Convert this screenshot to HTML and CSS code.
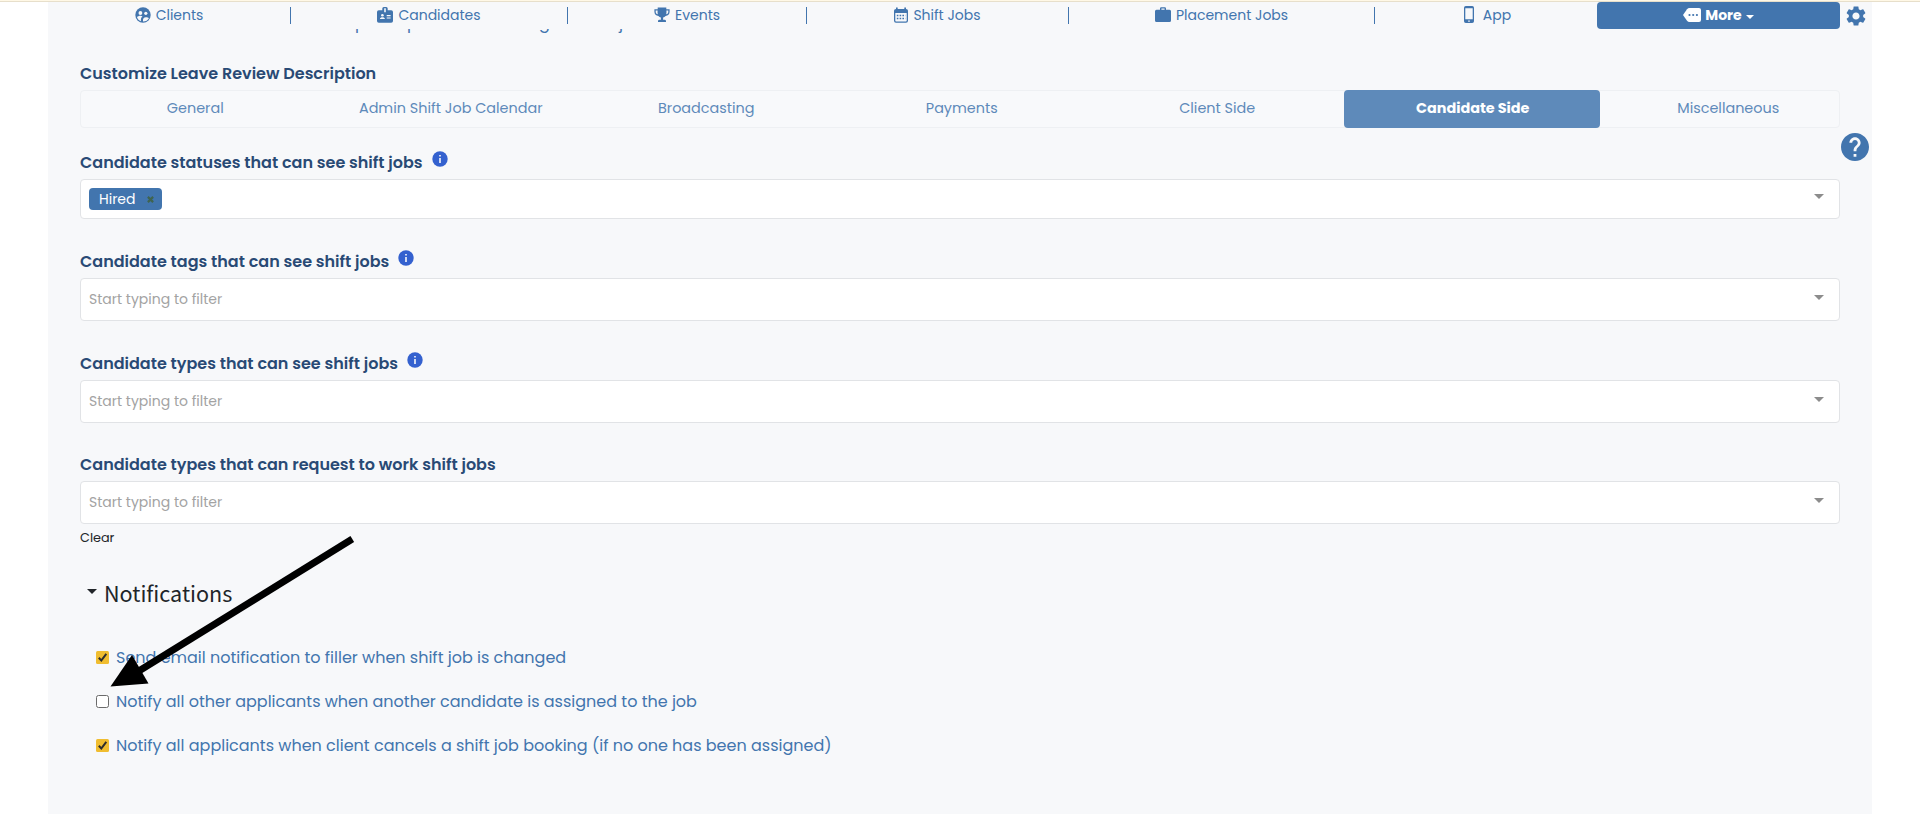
FILE: index.html
```html
<!DOCTYPE html>
<html lang="en">
<head>
<meta charset="utf-8">
<title>Settings</title>
<link rel="stylesheet" href="styles.css">
</head>
<body>
<div class="strip"></div>
<main class="panel">
  <nav class="nav">
    <a class="nav-item"><svg class="ico" viewBox="0 0 16 16"><circle cx="8" cy="8" r="7.7" fill="#4275ae"/><g fill="#f7f8fa"><circle cx="5.4" cy="6" r="1.9"/><circle cx="10.8" cy="6.3" r="1.6"/><path d="M2 10.3c.8-1.300 4-2 5.500-.9-1.500.9-1.800 2.600-1.500 4.800C4 13.500 2.600 12.200 2 10.300zM8 14.500c-.3-3 .8-4.300 2.900-4.300 1.400 0 2.400.4 3 1-1 2-3.100 3.300-5.900 3.300z"/></g></svg><span>Clients</span></a>
    <a class="nav-item"><svg class="ico" viewBox="0 0 16 16"><path fill="#4275ae" d="M1.800 3.200H5.300V1.500Q5.300 0 6.800 0h2.400q1.500 0 1.500 1.500v1.700h3.500Q16 3.200 16 5v9q0 1.700-1.800 1.700H1.800Q0 15.700 0 14V5q0-1.800 1.800-1.800z"/><g fill="#f7f8fa"><path d="M7.200 1.300h1.600v4H7.200zM9.700 8h3.900v1.200H9.700zM9.700 10.400h3.900v1.200H9.700zM2.900 12c0-2.300 5-2.300 5 0z"/><circle cx="5.400" cy="8.300" r="1.300"/></g></svg><span>Candidates</span></a>
    <a class="nav-item"><svg class="ico" viewBox="0 0 16 16"><path fill="#4275ae" fill-rule="evenodd" d="M3.700.6h8.600v1.600h3.300v2.500c0 2.400-1.700 3.900-4 4.200-.7.9-1.500 1.400-2.500 1.700v2.200h1.500q1.400 0 1.400 1.400v.8H4v-.8q0-1.400 1.400-1.400h1.500v-2.200c-1-.3-1.800-.8-2.500-1.700-2.300-.3-4-1.800-4-4.200V2.200h3.300zM1.700 3.600v1.100c0 1.300.8 2.200 2.100 2.600-.3-1.200-.3-2.300-.2-3.700zM14.300 3.600h-1.900c.1 1.400.1 2.500-.2 3.700 1.300-.4 2.100-1.300 2.100-2.600z"/></svg><span>Events</span></a>
    <a class="nav-item"><svg class="ico ico-shift" viewBox="0 0 14 16"><path fill="#4275ae" fill-rule="evenodd" d="M2 .4h1.700v1.500h6.600V.4H12v1.500q2 .1 2 1.900v9.900q0 2-2 2H2q-2 0-2-2V3.800Q0 2 2 1.900zM1.300 6v7.700q0 .8.800.8h9.800q.8 0 .8-.8V6z"/><path stroke="#4275ae" stroke-width="1.500" stroke-dasharray="1.600 1.200" d="M2.800 8.500h8.600M2.800 11.500h8.600"/></svg><span>Shift Jobs</span></a>
    <a class="nav-item"><svg class="ico" viewBox="0 0 16 16"><path fill="#4275ae" fill-rule="evenodd" d="M5 2.800V1.500Q5 .2 6.300.2h3.400Q11 .2 11 1.500v1.300h3.500Q16 2.800 16 4.300v9.200q0 1.500-1.500 1.500h-13Q0 15 0 13.500V4.300q0-1.500 1.500-1.500zM6.400 2.800h3.200V1.600H6.400z"/></svg><span>Placement Jobs</span></a>
    <a class="nav-item nav-last"><svg class="ico-app" viewBox="0 0 10 17"><path fill="#4275ae" fill-rule="evenodd" d="M1.800 0h6.400Q10 0 10 1.800v13.400Q10 17 8.200 17H1.800Q0 17 0 15.200V1.800Q0 0 1.800 0zM1.300 2.300v11h7.400v-11zM4.200 14.400v1.300h1.600v-1.300z"/></svg><span>App</span></a>
    <a class="more"><svg class="ico-more" viewBox="0 0 18 14"><path fill="#fff" d="M6.500 0H16q2 0 2 2v10q0 2-2 2H6.500Q5 14 4 12.700L0 7l4-5.700Q5 0 6.500 0z"/><g fill="#4275ae"><circle cx="6.500" cy="7" r="1.100"/><circle cx="10.200" cy="7" r="1.100"/><circle cx="13.900" cy="7" r="1.100"/></g></svg><span>More</span><svg class="more-caret" viewBox="0 0 8 4"><path fill="#fff" d="M0 0h8L4 4z"/></svg></a>
    <svg class="gear" viewBox="2 2 20 20"><path fill="#4275ae" d="M19.140 12.940c.040-.3.060-.610.060-.940 0-.320-.020-.640-.070-.940l2.030-1.580c.180-.140.230-.410.120-.610l-1.920-3.320c-.120-.220-.370-.290-.590-.220l-2.390.960c-.5-.380-1.030-.7-1.620-.940l-.360-2.540c-.040-.240-.240-.410-.480-.410h-3.840c-.240 0-.430.170-.470.410l-.360 2.540c-.590.240-1.130.570-1.620.940l-2.390-.960c-.220-.080-.470 0-.590.220L2.740 8.870c-.120.210-.080.470.120.610l2.030 1.580c-.050.3-.090.630-.090.940s.020.640.070.940l-2.030 1.580c-.180.140-.230.410-.120.610l1.920 3.320c.120.220.370.290.590.220l2.390-.960c.5.380 1.030.7 1.620.940l.360 2.540c.050.240.240.410.480.410h3.840c.240 0 .440-.170.470-.410l.360-2.540c.590-.240 1.130-.560 1.620-.940l2.390.960c.220.080.470 0 .590-.220l1.920-3.320c.120-.220.070-.470-.120-.610l-2.010-1.580zM12 15.600c-1.980 0-3.600-1.620-3.600-3.600s1.620-3.600 3.600-3.600 3.600 1.620 3.600 3.600-1.620 3.600-3.600 3.600z"/></svg>
  </nav>
  <div class="scrolled"><div class="scrolled-text"><span>p</span><span>p</span><span>g</span><span>j</span></div></div>
  <section class="content">
    <h2 class="label label-top"><span>Customize Leave Review Description</span></h2>
    <div class="tabs-frame"><div class="tabs">
      <a class="tab">General</a>
      <a class="tab">Admin Shift Job Calendar</a>
      <a class="tab">Broadcasting</a>
      <a class="tab">Payments</a>
      <a class="tab">Client Side</a>
      <a class="tab active">Candidate Side</a>
      <a class="tab">Miscellaneous</a>
    </div></div>

    <div class="label l1"><span>Candidate statuses that can see shift jobs</span><svg class="info" viewBox="0 0 16 16"><circle cx="8" cy="8" r="7.700" fill="#3461cf"/><path fill="#f7f8fa" d="M7.200 4h1.600v1.500H7.200zM7.200 6.900h1.600V12H7.200z"/></svg></div>
    <div class="select short"><span class="chip"><span>Hired</span><svg class="x" viewBox="0 0 8 8"><path stroke="#3f6450" stroke-width="2.500" d="M1 1l6 6M7 1L1 7"/></svg></span><i class="caret"></i></div>

    <div class="label l2"><span>Candidate tags that can see shift jobs</span><svg class="info" viewBox="0 0 16 16"><circle cx="8" cy="8" r="7.700" fill="#3461cf"/><path fill="#f7f8fa" d="M7.200 4h1.600v1.500H7.200zM7.200 6.900h1.600V12H7.200z"/></svg></div>
    <div class="select"><span class="ph">Start typing to filter</span><i class="caret"></i></div>

    <div class="label l3"><span>Candidate types that can see shift jobs</span><svg class="info" viewBox="0 0 16 16"><circle cx="8" cy="8" r="7.700" fill="#3461cf"/><path fill="#f7f8fa" d="M7.200 4h1.600v1.500H7.200zM7.200 6.900h1.600V12H7.200z"/></svg></div>
    <div class="select"><span class="ph">Start typing to filter</span><i class="caret"></i></div>

    <div class="label l4"><span>Candidate types that can request to work shift jobs</span></div>
    <div class="select"><span class="ph">Start typing to filter</span><i class="caret"></i></div>
    <div class="clear">Clear</div>

    <h3 class="notif"><i class="disclosure"></i><span>Notifications</span></h3>
    <div class="checks">
      <label class="check"><svg class="box" viewBox="0 0 13 13"><rect width="13" height="13" rx="1.500" fill="#f0bd30"/><path d="M2.800 6.800l2.500 2.700 5-6.700" fill="none" stroke="#2d2d2d" stroke-width="2"/></svg><span>Send email notification to filler when shift job is changed</span></label>
      <label class="check"><svg class="box" viewBox="0 0 13 13"><rect x=".5" y=".5" width="12" height="12" rx="2" fill="#fff" stroke="#6b6b6b"/></svg><span>Notify all other applicants when another candidate is assigned to the job</span></label>
      <label class="check"><svg class="box" viewBox="0 0 13 13"><rect width="13" height="13" rx="1.500" fill="#f0bd30"/><path d="M2.800 6.800l2.500 2.700 5-6.700" fill="none" stroke="#2d2d2d" stroke-width="2"/></svg><span>Notify all applicants when client cancels a shift job booking (if no one has been assigned)</span></label>
    </div>
  </section>
</main>
<svg class="help" viewBox="2 2 20 20"><path fill="#4275ae" d="M12 2C6.480 2 2 6.480 2 12s4.480 10 10 10 10-4.480 10-10S17.520 2 12 2zm1 17h-2v-2h2v2zm2.070-7.750l-.9.920C13.450 12.900 13 13.500 13 15h-2v-.5c0-1.100.450-2.100 1.170-2.830l1.240-1.260c.370-.360.590-.860.590-1.410 0-1.100-.9-2-2-2s-2 .9-2 2H8c0-2.210 1.790-4 4-4s4 1.790 4 4c0 .880-.360 1.680-.930 2.250z"/></svg>
<svg class="arrow" viewBox="0 0 250 156"><path d="M244.300 5L26 140" stroke="#000" stroke-width="7"/><path d="M2.500 152.500L24 121 40.500 149.500z"/></svg>
</body>
</html>
```
FILE: styles.css
```css
* { box-sizing: border-box; }
body { margin: 0; height: 814px; overflow: hidden; background: #fff; font-family: Poppins, Inter, sans-serif; color: #212529; }
svg { display: block; flex: none; }
span { white-space: nowrap; }
.strip { height: 2px; background: #fff8e6; border-bottom: 1px solid #e7dfcb; }
.panel { margin: 0 48px; height: 812px; background: #f7f8fa; }
.nav { display: grid; grid-template-columns: 243px 277px 239px 262px 306px 222px 243px 32px; height: 27px; font-size: 14px; color: #4275ae; }
.nav-item { display: flex; align-items: center; justify-content: center; gap: 5px; height: 17px; margin-top: 5px; border-right: 1px solid #4275ae; line-height: 17px; }
.nav-last { border-right: 0; gap: 9px; padding-left: 3px; }
.ico { width: 16px; height: 16px; margin-top: -2px; }
.ico-shift { width: 14px; }
.ico-app { width: 10px; height: 17px; margin-top: -3px; }
.more { display: flex; justify-content: center; align-items: center; background: #4275ae; color: #fff; font-weight: 700; border-radius: 4px; gap: 4px; }
.ico-more { width: 18px; height: 14px; margin-top: -2px; }
.more-caret { width: 8px; height: 4px; margin-top: 3px; }
.gear { width: 20px; height: 20px; margin: 4px 0 0 6px; }
.scrolled { height: 4px; overflow: hidden; color: #4275ae; font-size: 16px; line-height: 20px; }
.scrolled-text { display: grid; grid-template-columns: 52px 132px 80px 20px; margin: -15px 0 0 307px; }
.content { padding: 0 32px; }
.label { display: flex; align-items: flex-start; gap: 9px; height: 20px; margin: 0; font-size: 16px; line-height: 20px; font-weight: 600; color: #294a75; }
.label-top { margin-top: 31px; }
.info { width: 16px; height: 16px; margin-top: -2px; }
.tabs-frame { margin-top: 6px; height: 38px; border: 1px solid #eef0f3; border-radius: 4px; background: #f8f9fb; }
.tabs { display: grid; grid-template-columns: repeat(7, 255.500px); margin: -1px 0 0 -14.500px; height: 38px; }
.tab { display: flex; align-items: center; justify-content: center; padding: 0 0 2px 2px; font-size: 14.400px; color: #5e8aba; white-space: nowrap; }
.active { background: #5e8aba; color: #fff; font-weight: 700; border-radius: 4px; }
.l1 { margin-top: 25px; }
.l2 { margin-top: 33px; }
.l3 { margin-top: 33px; }
.l4 { margin-top: 32px; }
.select { display: flex; align-items: center; justify-content: space-between; height: 43px; margin-top: 6px; padding: 0 15px 0 8px; background: #fff; border: 1px solid #e1e3e6; border-radius: 4px; }
.short { height: 40px; }
.ph { font-size: 14px; color: #a3a3a3; }
.chip { display: flex; align-items: center; justify-content: space-between; width: 73px; height: 22px; padding: 0 8px 0 10px; background: #4275ae; border-radius: 4px; color: #fff; font-size: 14px; }
.x { width: 7px; height: 7px; }
.caret { border: 5px solid transparent; border-top-color: #8c8c8c; border-bottom: 0; margin-top: -5px; }
.clear { margin-top: 4px; font-size: 12.800px; line-height: 20px; }
.notif { display: flex; align-items: center; gap: 7px; margin: 30px 0 0 7px; font: 400 21.600px/30px "Noto Sans CJK JP", "Noto Sans", sans-serif; }
.disclosure { border: 5px solid transparent; border-top-color: #212529; border-bottom: 0; margin-top: -3px; }
.checks { margin: 39px 0 0 16px; }
.check { display: flex; align-items: center; gap: 7px; height: 20px; margin-bottom: 24px; font-size: 16px; color: #4275ae; }
.box { width: 13px; height: 13px; }
.help { position: absolute; left: 1841px; top: 133px; width: 28px; height: 28px; }
.arrow { position: absolute; left: 108px; top: 534px; width: 250px; height: 156px; }
```
